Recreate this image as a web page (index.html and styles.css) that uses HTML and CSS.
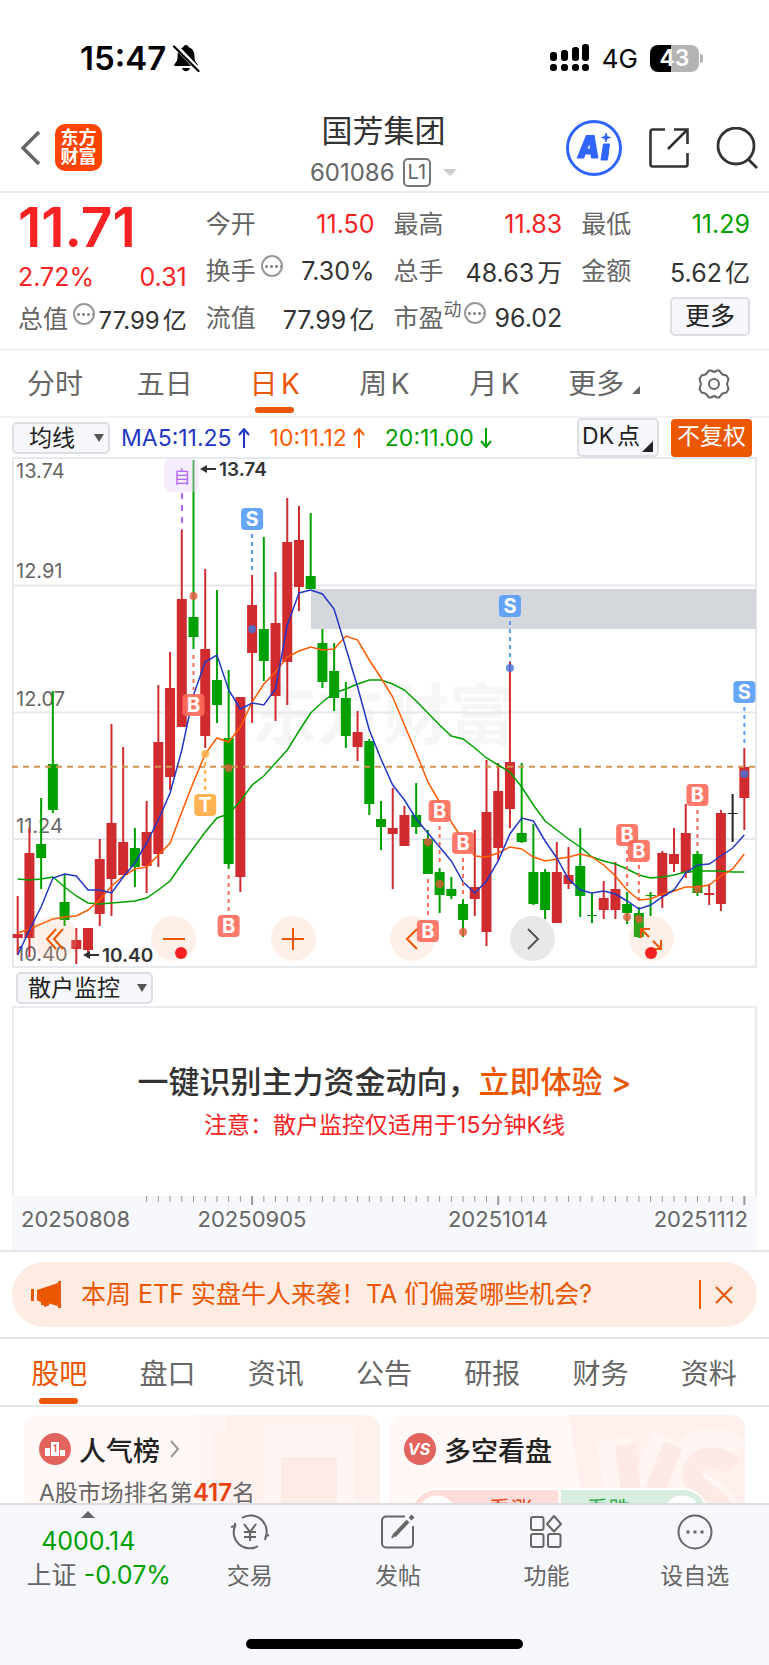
FILE: index.html
```html
<!DOCTYPE html>
<html lang="zh-CN">
<head>
    <meta charset="UTF-8">
    <meta name="viewport" content="width=device-width, initial-scale=1.0">
    <title>国芳集团 601086</title>
    <link rel="stylesheet" href="styles.css">
</head>
<body>

    <!-- Status bar -->
    <div class="status">
        <div class="status-left">
            <span class="clock">15:47</span>
            <svg width="28" height="28" viewBox="0 0 28 28" aria-hidden="true">
                <path d="M14 1c1.600 0 2.600 1 2.800 2.300 3.700 1.100 5.600 4.200 5.600 8.200 0 5 1.300 6.500 3 8.500.9 1.100.5 2-.8 2H3.400c-1.300 0-1.700-.9-.8-2 1.700-2 3-3.500 3-8.500 0-4 1.900-7.100 5.600-8.200C11.400 2 12.400 1 14 1z"/>
                <path d="M10 24h8c-.5 2-2 3.200-4 3.200S10.500 26 10 24z"/>
                <path d="M3 1.500l24 25" stroke="#fff" stroke-width="5"/>
                <path d="M2 2.500l24.500 24.500" stroke="#000" stroke-width="2.200" stroke-linecap="round"/>
            </svg>
        </div>
        <div class="status-right">
            <svg width="40" height="28" viewBox="0 0 40 28" aria-hidden="true">
                <rect x="0" y="8" width="7" height="9" rx="3"/><rect x="11" y="6" width="7" height="11" rx="3"/>
                <rect x="22" y="3" width="7" height="14" rx="3"/><rect x="32" y="0" width="7" height="17" rx="3"/>
                <rect x="0" y="20" width="7" height="7" rx="3"/><rect x="11" y="20" width="7" height="7" rx="3"/>
                <rect x="22" y="20" width="7" height="7" rx="3"/><rect x="32" y="20" width="7" height="7" rx="3"/>
            </svg>
            <span class="net">4G</span>
            <span class="battery">43</span>
        </div>
    </div>

    <!-- Header -->
    <header>
        <div class="head-left">
            <button class="icon-btn" aria-label="返回">
                <svg width="22" height="36" viewBox="0 0 22 36" fill="none" stroke="#666" stroke-width="3.500"><path d="M20 2L4 18l16 16"/></svg>
            </button>
            <a class="logo" href="#">东方<br>财富</a>
        </div>
        <div class="head-title">
            <h1>国芳集团</h1>
            <div class="code">601086 <span class="level">L1</span><span class="caret"></span></div>
        </div>
        <div class="head-right">
            <button class="icon-btn" aria-label="AI">
                <svg width="56" height="56" viewBox="0 0 56 56" fill="none">
                    <circle cx="28" cy="28" r="26.500" stroke="#3064ff" stroke-width="3"/>
                    <path d="M20 15h8.500l4 23.500h-7.500l-.5-4h-5l-1.500 4h-7.500zM21.500 28.500h2.500l-.5-4z" fill="#3064ff" fill-rule="evenodd"/>
                    <path d="M37.500 24h6l-2 16h-6.500z" fill="#3064ff" stroke="#3064ff" stroke-linejoin="round"/>
                    <path d="M40 13c.5 3 1.500 4 4.500 4.500-3 .5-4 1.500-4.500 4.500-.5-3-1.500-4-4.500-4.500 3-.5 4-1.500 4.500-4.500z" fill="#3064ff" stroke="#3064ff"/>
                </svg>
            </button>
            <button class="icon-btn" aria-label="分享">
                <svg width="42" height="42" viewBox="0 0 42 42" fill="none" stroke="#333" stroke-width="2.600">
                    <path d="M17 2.500H4.500a2 2 0 0 0-2 2v33a2 2 0 0 0 2 2h33a2 2 0 0 0 2-2V26"/><path d="M26 2.500h13.500V17M39 3L20 22"/>
                </svg>
            </button>
            <button class="icon-btn" aria-label="搜索">
                <svg width="42" height="42" viewBox="0 0 42 42" fill="none" stroke="#333" stroke-width="2.800">
                    <circle cx="20" cy="19" r="18"/><path d="M32 32l9 9"/>
                </svg>
            </button>
        </div>
    </header>

    <main>
        <!-- Quote -->
        <section class="quote">
            <div class="col first">
                <div class="price">11.71</div>
                <div class="row red"><span>2.72%</span><span>0.31</span></div>
                <div class="row"><span class="label">总值<i class="info"></i></span><span>77.99亿</span></div>
            </div>
            <div class="col">
                <div class="row"><span class="label">今开</span><span class="red">11.50</span></div>
                <div class="row"><span class="label">换手<i class="info"></i></span><span>7.30%</span></div>
                <div class="row"><span class="label">流值</span><span>77.99亿</span></div>
            </div>
            <div class="col">
                <div class="row"><span class="label">最高</span><span class="red">11.83</span></div>
                <div class="row"><span class="label">总手</span><span>48.63万</span></div>
                <div class="row"><span class="label">市盈<small>动</small><i class="info tight"></i></span><span>96.02</span></div>
            </div>
            <div class="col">
                <div class="row"><span class="label">最低</span><span class="green">11.29</span></div>
                <div class="row"><span class="label">金额</span><span>5.62亿</span></div>
                <div class="row end"><button class="more">更多</button></div>
            </div>
        </section>

        <!-- K line periods -->
        <nav class="periods">
            <a href="#">分时</a>
            <a href="#">五日</a>
            <a href="#" class="on">日K</a>
            <a href="#">周K</a>
            <a href="#">月K</a>
            <a href="#" class="sub">更多</a>
            <button class="icon-btn" aria-label="设置">
                <svg width="32" height="32" viewBox="0 0 32 32" fill="none" stroke="#666" stroke-width="2">
                    <path d="M11 2.500h2l3 1.500 3-1.500h2l3.500 4 4 1 2 3.500-1.500 5 1.500 5-2 3.500-4 1-3.500 4h-2l-3-1.500-3 1.500h-2l-3.500-4-4-1-2-3.500 1.500-5-1.500-5 2-3.500 4-1z" stroke-linejoin="round"/>
                    <circle cx="16" cy="16" r="5"/>
                </svg>
            </button>
        </nav>

        <!-- Indicators -->
        <div class="indicators">
            <div class="pick pick-ma">
                <select aria-label="主图指标"><option>均线</option><option>BOLL</option></select>
            </div>
            <span class="ma ma5">MA5:11.25<svg width="12" height="20" viewBox="0 0 12 20"><path d="M6 20V1M1 7l5-6 5 6"/></svg></span>
            <span class="ma ma10">10:11.12<svg width="12" height="20" viewBox="0 0 12 20"><path d="M6 20V1M1 7l5-6 5 6"/></svg></span>
            <span class="ma ma20">20:11.00<svg width="12" height="20" viewBox="0 0 12 20"><path d="M6 0v19M1 13l5 6 5-6"/></svg></span>
            <button class="dk">DK点</button>
            <button class="adjust">不复权</button>
        </div>

        <!-- Chart -->
        <div class="chart">
            <svg id="candles" viewBox="12 457 745 511"></svg>
            <div class="tools">
                <button aria-label="最早"><svg width="20" height="24" viewBox="0 0 20 24"><path d="M11 2L2 12l9 10M18 2L9 12l9 10"/></svg></button>
                <button aria-label="缩小" class="dot"><svg width="24" height="24" viewBox="0 0 24 24"><path d="M1 12h22"/></svg></button>
                <button aria-label="放大"><svg width="24" height="24" viewBox="0 0 24 24"><path d="M1 12h22M12 1v22"/></svg></button>
                <button aria-label="向左"><svg width="24" height="24" viewBox="0 0 24 24"><path d="M16 2L6 12l10 10"/></svg></button>
                <button aria-label="向右" class="gray"><svg width="24" height="24" viewBox="0 0 24 24"><path d="M8 2l10 10L8 22"/></svg></button>
                <button aria-label="全屏" class="dot mid"><svg width="24" height="24" viewBox="0 0 24 24"><path d="M2 11V2h9M2 2l8 8M22 13v9h-9M22 22l-8-8"/></svg></button>
            </div>
            <svg id="marks" viewBox="12 457 745 511"></svg>
        </div>

        <div class="sub-pick">
            <div class="pick">
                <select aria-label="副图指标"><option>散户监控</option><option>MACD</option></select>
            </div>
        </div>
        <section class="promo">
            <p class="promo-main">一键识别主力资金动向，<a href="#">立即体验 &gt;</a></p>
            <p class="promo-note">注意：散户监控仅适用于15分钟K线</p>
        </section>
        <div class="axis"><svg id="dates" viewBox="12 1196 745 54"></svg></div>

        <!-- Notice -->
        <div class="notice">
            <svg width="31" height="28" viewBox="0 0 31 28" fill="#eb5600" aria-hidden="true">
                <path d="M0 8h3v12H0zM6 9l21-7V0h3v27h-3v-2l-9-2.500v2L13 26v-2h-3v-3l-4-1.500z"/>
            </svg>
            <a href="#">本周 ETF 实盘牛人来袭！TA 们偏爱哪些机会?</a>
            <button class="close" aria-label="关闭">
                <svg width="18" height="18" viewBox="0 0 18 18" fill="none" stroke="#eb5600" stroke-width="2"><path d="M1 1l16 16M17 1L1 17"/></svg>
            </button>
        </div>

        <nav class="tabs">
            <a href="#" class="on">股吧</a>
            <a href="#">盘口</a>
            <a href="#">资讯</a>
            <a href="#">公告</a>
            <a href="#">研报</a>
            <a href="#">财务</a>
            <a href="#">资料</a>
        </nav>

        <div class="cards">
            <section class="card">
                <svg class="deco" width="186" height="130" viewBox="0 0 186 130" aria-hidden="true">
                    <path fill="#fff1ee" d="M0 0h186v130H0z"/>
                    <path fill="#fff6f4" d="M0 0h32v18H18v112H0zM70 10h90v110h20v10H70z"/>
                    <path fill="#fdebe8" d="M87 42h56v88H87zM22 96h40v34H22z"/>
                    <path fill="#fff4f2" d="M103 98l18-10v42h-8V100l-10 4z"/>
                </svg>
                <h2>
                    <svg width="32" height="32" viewBox="0 0 32 32" aria-hidden="true">
                        <circle cx="16" cy="16" r="16" fill="#e3635f"/>
                        <path fill="#fff" d="M6 15h5v8H6zM12 9h8v14h-8zM21 17h5v6h-5z"/>
                        <path d="M14.500 13l2-1v7" stroke="#e3635f" stroke-width="1.500" fill="none"/>
                    </svg>
                    人气榜
                    <svg width="12" height="18" viewBox="0 0 12 18" fill="none" stroke="#999" stroke-width="2"><path d="M3 1l7 8-7 8"/></svg>
                </h2>
                <p>A股市场排名第<b>417</b>名</p>
            </section>
            <section class="card">
                <svg class="deco" width="180" height="130" viewBox="0 0 180 130" aria-hidden="true">
                    <path fill="#fff0ed" d="M4 0h176v130H24z"/>
                    <g fill="none" stroke-linejoin="round">
                        <path stroke="#fff5f3" stroke-width="34" d="M48 24l14 90 42-90M170 40c-24-20-54-4-50 18 6 22 40 20 36 44"/>
                        <path stroke="#fdeae7" stroke-width="20" d="M60 30l12 90 36-90M168 52c-20-20-46-6-40 12 6 16 34 16 30 40"/>
                    </g>
                </svg>
                <h2>
                    <svg width="32" height="32" viewBox="0 0 32 32" aria-hidden="true">
                        <circle cx="16" cy="16" r="16" fill="#e3635f"/>
                        <text class="vs" x="15" y="22" text-anchor="middle">VS</text>
                    </svg>
                    多空看盘
                </h2>
                <div class="vote"><button class="up">看涨</button><button class="down">看跌</button></div>
            </section>
        </div>
    </main>

    <!-- Bottom bar -->
    <footer>
        <div class="bar">
            <a href="#" class="index">
                <span class="tri"></span>
                <span class="green">4000.14</span>
                <span>上证 <span class="green">-0.07%</span></span>
            </a>
            <a href="#">
                <svg width="40" height="36" viewBox="0 0 40 36">
                    <path d="M12 4a16 16 0 0 1 24 18l3-1M28 32A16 16 0 0 1 5 12l-4 1"/><path d="M36 22l-1 4M5 12l0-3M14 10l6 8 6-8M20 18v9M14 18h12M14 23h12"/>
                </svg>
                交易
            </a>
            <a href="#">
                <svg width="36" height="36" viewBox="0 0 36 36">
                    <path d="M25 2.500H6a4 4 0 0 0-4 4v23a4 4 0 0 0 4 4h23a4 4 0 0 0 4-4V12"/><path d="M14 22l14-15" stroke-width="4"/><path d="M30 5l3-3" stroke-width="4"/><path d="M12 24l3-5"/>
                </svg>
                发帖
            </a>
            <a href="#">
                <svg width="36" height="36" viewBox="0 0 36 36">
                    <rect x="3" y="3" width="12.500" height="13" rx="2"/><rect x="3" y="20" width="12.500" height="13" rx="2"/><rect x="20" y="20" width="12.500" height="13" rx="2"/><path d="M26 2l7 8-7 7.500-7-7.500z" stroke-linejoin="round"/>
                </svg>
                功能
            </a>
            <a href="#">
                <svg width="36" height="36" viewBox="0 0 36 36">
                    <circle cx="18" cy="18" r="16.500"/><path d="M9.500 18h3M16.500 18h3M23.500 18h3" stroke-width="3"/>
                </svg>
                设自选
            </a>
        </div>
        <div class="home"></div>
    </footer>

    <script src="chart.js"></script>
</body>
</html>
```
FILE: styles.css
```css
* {
    box-sizing: border-box;
}

body {
    font-family: Inter, "Noto Sans CJK SC", sans-serif;
    margin: 0;
    height: 100vh;
    display: flex;
    flex-direction: column;
    background: #fff;
    color: #333;
    overflow: hidden;
    text-autospace: normal;
}

a {
    color: inherit;
    text-decoration: none;
}

button, select {
    font: inherit;
    color: inherit;
    margin: 0;
    padding: 0;
    border: 0;
    background: none;
    text-autospace: inherit;
}

svg {
    display: block;
    flex-shrink: 0;
}

h1, h2, p {
    margin: 0;
    font-weight: 400;
}

.red { color: #f92223; }
.green { color: #00a000; }

.icon-btn {
    display: flex;
    align-items: center;
    justify-content: center;
}

/* Status bar */
.status {
    flex-shrink: 0;
    display: flex;
    justify-content: space-between;
    align-items: center;
    padding: 40px 66px 0 80px;
    color: #000;
}

.status-left, .status-right {
    display: flex;
    align-items: center;
    height: 36px;
}

.status-left { gap: 6px; }
.status-right { gap: 12px; }

.clock {
    font-size: 33px;
    font-weight: 600;
}

.net {
    font-size: 26px;
}

.battery {
    position: relative;
    width: 49px;
    height: 27px;
    margin-right: 4px;
    border-radius: 8px;
    background: linear-gradient(90deg, #000 43%, #b3b3b3 43%);
    color: #fff;
    font-size: 23px;
    font-weight: 600;
    line-height: 27px;
    text-align: center;
}

.battery::after {
    content: "";
    position: absolute;
    right: -4px;
    top: 9px;
    width: 3px;
    height: 9px;
    border-radius: 0 3px 3px 0;
    background: #b3b3b3;
}

/* Header */
header {
    flex-shrink: 0;
    display: grid;
    grid-template-columns: 1fr auto 1fr;
    align-items: center;
    padding: 28px 11px 0 19px;
    border-bottom: 2px solid #ececec;
}

.head-left {
    display: flex;
    align-items: center;
    gap: 14px;
}

.logo {
    width: 47px;
    height: 47px;
    padding-top: 4px;
    border-radius: 10px;
    background: #ff4400;
    color: #fff;
    font-size: 18px;
    font-weight: 700;
    line-height: 19px;
    text-align: center;
}

.head-title {
    padding: 8px 10px 0 0;
    text-align: center;
}

h1 {
    font-size: 31px;
    line-height: 38px;
}

.code {
    display: flex;
    align-items: center;
    justify-content: center;
    height: 41px;
    padding-top: 3px;
    gap: 8px;
    font-size: 24px;
    color: #666;
}

.level {
    padding: 0 3px;
    border: 2px solid #777;
    border-radius: 5px;
    font-size: 20px;
    line-height: 25px;
}

.caret {
    margin-left: 4px;
    border: 7px solid transparent;
    border-top-color: #ccc;
    border-bottom: 0;
}

.head-right {
    display: flex;
    align-items: center;
    justify-content: flex-end;
    gap: 26px;
}

main {
    flex: 1;
    min-height: 0;
    overflow: hidden;
}

/* Quote */
.quote {
    display: grid;
    grid-template-columns: repeat(4, 1fr);
    column-gap: 19px;
    padding: 7px 19px 8px 18px;
    border-bottom: 1px solid #ececec;
    font-size: 25px;
}

.row {
    display: flex;
    justify-content: space-between;
    align-items: center;
    height: 47px;
    white-space: nowrap;
}

.first .row {
    height: 46px;
}

.first .row:last-child {
    height: 36px;
    font-size: 24px;
}

.row.end {
    justify-content: flex-end;
}

.label {
    display: flex;
    padding-bottom: 3px;
    color: #666;
    font-size: 25px;
}

.label small {
    font-size: 18px;
    line-height: 24px;
}

/* small round hint with three dots */
.info {
    width: 22px;
    height: 22px;
    margin: 4px 0 0 5px;
    border: 2px solid #999;
    border-radius: 50%;
    background: radial-gradient(circle, #888 1px, transparent 2px) 1px 7px / 5px 5px repeat-x;
}

.info.tight {
    margin-left: 2px;
}

.price {
    color: #f92223;
    font-size: 55px;
    font-weight: 600;
    line-height: 54px;
}

.more {
    width: 80px;
    height: 39px;
    margin-bottom: 3px;
    border: 2px solid #dddee4;
    border-radius: 5px;
    background: #f6f7fa;
    color: #222;
    font-size: 25px;
    line-height: 34px;
}

/* Tabs */
.periods, .tabs {
    display: grid;
    grid-template-columns: repeat(7, 1fr);
    font-size: 28px;
    color: #666;
    text-align: center;
}

.periods {
    height: 68px;
    line-height: 68px;
    border-bottom: 2px solid #f2f2f4;
}

.periods a, .tabs a {
    position: relative;
}

.on {
    color: #eb5600;
}

.on::after {
    content: "";
    position: absolute;
    left: 50%;
    bottom: 5px;
    width: 39px;
    height: 6px;
    margin-left: -20px;
    border-radius: 3px;
    background: #eb5600;
}

.sub::after {
    content: "";
    display: inline-block;
    margin-left: 8px;
    border-left: 8px solid transparent;
    border-bottom: 8px solid #666;
}

/* Indicators */
.indicators {
    display: flex;
    align-items: center;
    height: 39px;
    margin: 0 17px 0 12px;
    font-size: 23px;
    white-space: nowrap;
}

.pick {
    position: relative;
    width: 137px;
    height: 32px;
}

.pick select {
    appearance: none;
    width: 100%;
    height: 100%;
    padding-left: 10px;
    border: 2px solid #dddee4;
    border-radius: 5px;
    background: #f6f7fa;
    color: #222;
    font-size: 23px;
    line-height: 28px;
}

.pick::after {
    content: "";
    position: absolute;
    right: 6px;
    top: 12px;
    border: 5px solid transparent;
    border-top: 8px solid #555;
    border-bottom: 0;
}

.pick-ma {
    width: 98px;
    margin-right: 11px;
}

.pick-ma select {
    padding-left: 15px;
}

.ma {
    display: flex;
    align-items: center;
    gap: 6px;
    margin-right: 20px;
}

.ma svg {
    fill: none;
    stroke: currentColor;
    stroke-width: 2;
}

.ma5 { color: #2238c4; }
.ma10 { color: #ff5a00; }
.ma20 { color: #00a000; }

.dk {
    position: relative;
    width: 82px;
    height: 39px;
    margin-left: auto;
    padding: 0 14px 3px 0;
    border: 2px solid #dddee4;
    border-radius: 5px;
    background: #f6f7fa;
    color: #222;
    font-size: 23px;
    line-height: 30px;
}

.dk::after {
    content: "";
    position: absolute;
    right: 4px;
    bottom: 3px;
    border-left: 11px solid transparent;
    border-bottom: 11px solid #222;
}

.adjust {
    width: 81px;
    height: 38px;
    margin-left: 12px;
    padding-bottom: 3px;
    border-radius: 4px;
    background: #eb5600;
    color: #fff;
    font-size: 23px;
    line-height: 30px;
}

/* Chart */
.chart {
    position: relative;
    margin: 0 12px;
}

.chart svg text, .axis text {
    font-family: Inter, "Noto Sans CJK SC", sans-serif;
}

#marks {
    position: absolute;
    left: 0;
    top: 0;
    width: 100%;
    pointer-events: none;
}

.grid { stroke: #e6e8ed; stroke-width: 2; fill: none; }
.scale { font-size: 20px; fill: #666; }
.extreme { font-size: 19px; font-weight: 600; fill: #333; }
.watermark { font-size: 66px; font-weight: 700; fill: #f6f6f7; }
.mark { font-size: 20px; font-weight: 700; fill: #fff; }
.mark-zi { font-size: 17px; fill: #b066ff; }

.tools {
    position: absolute;
    left: 20px;
    right: 83px;
    bottom: 7px;
    display: flex;
    justify-content: space-between;
}

.tools button {
    position: relative;
    display: flex;
    align-items: center;
    justify-content: center;
    width: 45px;
    height: 45px;
    border-radius: 50%;
    background: rgba(250, 180, 140, .2);
}

.tools svg {
    fill: none;
    stroke: #eb5600;
    stroke-width: 2;
}

.tools .gray {
    background: rgba(210, 210, 210, .5);
}

.tools .gray svg {
    stroke: #555;
}

.dot::after {
    content: "";
    position: absolute;
    left: 24px;
    bottom: 2px;
    width: 12px;
    height: 12px;
    border-radius: 50%;
    background: #f92223;
}

.dot.mid::after {
    left: 16px;
}

/* Sub chart */
.sub-pick {
    padding: 4px 16px 2px;
}

.promo {
    height: 190px;
    margin: 0 12px;
    padding-top: 52px;
    border: 2px solid #eaebef;
    border-bottom: 0;
    text-align: center;
    white-space: nowrap;
    text-autospace: no-autospace;
}

.promo-main {
    font-size: 31px;
    font-weight: 500;
    line-height: 44px;
}

.promo-main a {
    color: #eb5600;
}

.promo-note {
    font-size: 23px;
    line-height: 42px;
    color: #f92223;
}

.axis {
    padding: 0 12px;
    border-bottom: 2px solid #e3e4ea;
}

.axis svg {
    background: #f7f8fb;
}

.axis text {
    font-size: 22px;
    fill: #666;
}

/* Notice */
.notice {
    display: flex;
    align-items: center;
    height: 65px;
    margin: 10px 12px;
    padding: 0 24px 0 19px;
    border-radius: 33px;
    background: #feece3;
    color: #eb5600;
    font-size: 25px;
    line-height: 34px;
    white-space: nowrap;
    text-autospace: no-autospace;
}

.notice a {
    flex: 1;
    margin-left: 19px;
    padding-bottom: 2px;
}

.close {
    height: 29px;
    padding-left: 14px;
    border-left: 2px solid #eb5600;
}

.tabs {
    height: 70px;
    padding: 0 6px 0 5px;
    border-top: 2px solid #e6e6ea;
    border-bottom: 2px solid #e6e6ea;
    line-height: 70px;
}

/* Cards */
.cards {
    display: grid;
    grid-template-columns: 1fr 1fr;
    gap: 9px;
    padding: 8px 24px;
}

.card {
    position: relative;
    height: 130px;
    padding: 13px 15px;
    border-radius: 14px;
    background: #fff8f6;
    overflow: hidden;
}

.deco {
    position: absolute;
    right: 0;
    top: 0;
}

h2 {
    position: relative;
    display: flex;
    align-items: center;
    gap: 8px;
    height: 42px;
    font-size: 27px;
    font-weight: 500;
    color: #222;
}

.vs {
    font-size: 16px;
    font-weight: 700;
    font-style: italic;
    fill: #fff;
}

.card p {
    position: relative;
    margin-top: 2px;
    font-size: 23px;
    line-height: 42px;
    color: #666;
    text-autospace: no-autospace;
}

.card b {
    font-size: 24px;
    font-weight: 600;
    color: #e8430f;
}

.vote {
    position: relative;
    display: flex;
    gap: 3px;
    height: 50px;
    margin: 18px 22px 0 7px;
    border: 2px solid #fff;
    border-radius: 25px;
    overflow: hidden;
    font-size: 22px;
}

.vote button {
    flex: 1;
    padding-bottom: 12px;
}

.up {
    padding-left: 50px;
    background: radial-gradient(circle at 24px 24px, #fff 18px, transparent 19px), #fddcd9;
    color: #e8430f;
}

.down {
    padding-right: 50px;
    background: radial-gradient(circle at calc(100% - 24px) 24px, #fff 18px, transparent 19px), #d5eedd;
    color: #2fa84f;
}

/* Bottom bar */
footer {
    flex-shrink: 0;
    border-top: 2px solid #dcdde2;
    background: #f6f7fa;
}

.bar {
    display: grid;
    grid-template-columns: 175fr 148fr 148fr 148fr 148fr;
    height: 134px;
    font-size: 23px;
    color: #666;
}

.bar a {
    display: flex;
    flex-direction: column;
    align-items: center;
    padding-top: 9px;
    gap: 9px;
    line-height: 34px;
}

.bar svg {
    fill: none;
    stroke: #666;
    stroke-width: 2;
}

.bar .index {
    gap: 0;
    padding: 6px 0 0 22px;
    font-size: 25px;
    line-height: 34px;
    white-space: nowrap;
}

.index > span:nth-child(2) {
    margin-right: 21px;
    padding-top: 6px;
}

.bar .tri {
    margin-right: 21px;
    border: 7px solid transparent;
    border-top: 0;
    border-bottom-color: #666;
}

.home {
    width: 36%;
    height: 10px;
    margin: 0 auto 16px;
    border-radius: 5px;
    background: #000;
}
```
FILE: chart.js
```js
const RED = '#d02c2f';
const GREEN = '#00a000';
const BLACK = '#222';
const STEP = 11.72;
const START = 17.7;

// color, high, body top, body bottom, low
const candles = [
    'r 896 934 938 955', 'r 828 853 938 957', 'g 798 844 858 889', 'g 691 764 810 813', 'g 875 902 920 926',
    'r 928 940 949 964', 'r 928 928 950 955', 'r 839 859 914 926', 'r 724 823 879 916', 'r 747 842 875 875',
    'g 828 848 867 887', 'r 801 832 866 893', 'r 685 742 854 867', 'r 652 688 777 790', 'r 530 599 727 727',
    'g 460 617 637 649', 'r 569 649 736 748', 'g 590 680 705 723', 'g 670 738 864 869', 'r 697 697 877 892',
    'r 575 605 653 723', 'g 537 629 661 681', 'r 572 623 696 721', 'r 498 542 662 705', 'r 506 540 587 611',
    'g 513 576 589 589', 'g 629 643 682 688', 'g 643 671 698 711', 'g 682 698 736 748', 'r 711 732 747 761',
    'g 739 741 804 815', 'g 801 819 827 850', 'r 788 828 834 889', 'r 806 815 846 846', 'g 783 815 827 834',
    'g 830 839 874 874', 'g 868 872 895 913', 'g 877 889 896 899', 'g 899 904 920 937', 'r 830 887 899 916',
    'r 760 812 932 946', 'r 763 791 848 860', 'r 662 762 809 828', 'g 763 833 842 843', 'g 824 872 904 905',
    'g 869 872 910 919', 'r 842 872 923 923', 'r 847 875 884 889', 'g 828 866 896 917', 'g 893 915 916 923',
    'r 881 898 910 919', 'r 862 889 910 919', 'g 892 904 913 924', 'g 907 913 937 938', 'g 892 895 896 916',
    'r 851 853 896 908', 'r 828 854 864 872', 'r 804 833 873 878', 'g 851 854 893 896', 'r 884 893 895 905',
    'r 810 813 904 911', 'k 794 813 814 842', 'r 748 767 798 830'
];

const ma5 = [955, 930, 907, 878, 874, 876, 890, 890, 893, 877, 863, 843, 820, 793, 750, 695, 662, 655, 690, 709, 703,
    705, 689, 625, 593, 590, 594, 609, 648, 687, 730, 759, 785, 800, 819, 833, 847, 861, 882, 893, 881, 861,
    834, 818, 821, 841, 858, 879, 890, 893, 891, 894, 901, 909, 905, 897, 890, 873, 865, 864, 856, 848, 835];
const ma10 = [933, 929, 924, 919, 917, 916, 910, 900, 886, 876, 869, 867, 855, 843, 812, 782, 754, 738, 742, 727, 702,
    684, 672, 657, 651, 647, 650, 649, 636, 640, 660, 678, 697, 725, 753, 782, 802, 822, 840, 856, 857, 853,
    847, 849, 857, 861, 859, 857, 854, 857, 865, 876, 890, 900, 899, 894, 891, 887, 887, 885, 876, 869, 854];
const ma20 = [879, 880, 879, 877, 887, 896, 903, 904, 903, 902, 901, 898, 890, 881, 864, 848, 832, 818, 814, 801, 785,
    776, 763, 750, 731, 713, 702, 693, 689, 684, 680, 680, 684, 690, 701, 713, 725, 736, 739, 748, 758, 765,
    772, 787, 805, 821, 830, 839, 847, 857, 861, 864, 869, 875, 878, 877, 875, 872, 871, 871, 871, 872, 872];

// candle index, letter, box top, dash from, dash to, dot
const marks = [
    [20, 'S', 508, 534, 570, 629], [42, 'S', 595, 621, 662, 668], [62, 'S', 681, 707, 745, 774],
    [15, 'B', 694, 655, 690, 596], [16, 'T', 794, 762, 790, 754], [18, 'B', 915, 875, 911, 768],
    [35, 'B', 920, 879, 916, 842], [36, 'B', 800, 826, 865, 884], [38, 'B', 832, 858, 895, 932],
    [52, 'B', 824, 850, 890, 917], [53, 'B', 840, 865, 903, 919], [58, 'B', 784, 810, 848, 889]
];

const xAt = i => START + STEP * i;

function drawLine(values, color) {
    const points = values.map((y, i) => xAt(i).toFixed(1) + ',' + y).join(' ');
    return `<polyline points="${points}" fill="none" stroke="${color}" stroke-width="1.5"/>`;
}

function drawArrow(x, y) {
    return `<path d="M${x + 16} ${y}H${x + 4}" stroke="#333" stroke-width="2"/><path d="M${x} ${y}l7-4v8z" fill="#333"/>`;
}

function drawCandles() {
    let out = '<text class="watermark" x="251" y="739">东方财富</text>';
    out += '<path class="grid" d="M12 585.500H757M12 712.500H757M12 839H757"/>';
    out += '<rect class="grid" x="13" y="458" width="743" height="509"/>';
    out += '<rect x="311" y="589" width="445" height="40" fill="#d4d7dc"/>';
    [['13.74', 478], ['12.91', 578], ['12.07', 706], ['11.24', 833], ['10.40', 961]].forEach(([t, y]) => {
        out += `<text class="scale" x="16" y="${y}">${t}</text>`;
    });
    candles.forEach((row, i) => {
        const [c, high, top, bottom, low] = row.split(' ');
        const color = c === 'r' ? RED : c === 'g' ? GREEN : BLACK;
        const x = xAt(i);
        out += `<rect x="${x - 1}" y="${high}" width="2" height="${low - high}" fill="${color}"/>`;
        out += `<rect x="${x - 5}" y="${top}" width="10" height="${bottom - top}" fill="${color}"/>`;
    });
    out += '<path d="M12 766.700H757" stroke="#cf9350" stroke-width="2" stroke-dasharray="6 5"/>';
    out += drawLine(ma20, GREEN) + drawLine(ma10, '#ff5a00') + drawLine(ma5, '#2238c4');
    out += drawArrow(200, 469) + '<text class="extreme" x="219" y="476">13.74</text>';
    out += drawArrow(83, 955) + '<text class="extreme" x="102" y="962">10.40</text>';
    document.getElementById('candles').innerHTML = out;
}

function drawMarks() {
    const colors = { S: '#559cf9', B: '#ff6b5b', T: '#ffab40' };
    let out = '<rect x="164" y="459" width="35" height="33" rx="6" fill="#e6d0fb" opacity=".4"/>';
    out += '<text class="mark-zi" x="182" y="483" text-anchor="middle">自</text>';
    out += '<path d="M182 493V530" stroke="#b066ff" stroke-width="2" stroke-dasharray="6 6"/>';
    marks.forEach(([i, letter, top, from, to, dot]) => {
        const x = xAt(i);
        const color = colors[letter];
        const dotColor = letter === 'S' ? '#3f76e0' : letter === 'T' ? '#ffab40' : '#e55a3c';
        out += `<path d="M${x} ${from}V${to}" stroke="${color}" stroke-width="2" stroke-dasharray="4 4"/>`;
        out += `<circle cx="${x}" cy="${dot}" r="4" fill="${dotColor}" opacity=".8"/>`;
        out += `<rect x="${x - 11}" y="${top}" width="22" height="22" rx="4" fill="${color}" opacity=".9"/>`;
        out += `<text class="mark" x="${x}" y="${top + 18}" text-anchor="middle">${letter}</text>`;
    });
    document.getElementById('marks').innerHTML = out;
}

function drawDates() {
    let out = '';
    for (let i = 11; i <= 62; i++) {
        const major = (i + 1) % 21 === 0;
        out += `<path d="M${xAt(i)} 1196v${major ? 9 : 6}" stroke="#999" stroke-width="${major ? 2 : 1}"/>`;
    }
    out += '<text x="21" y="1227">20250808</text>';
    out += '<text x="252" y="1227" text-anchor="middle">20250905</text>';
    out += '<text x="498" y="1227" text-anchor="middle">20251014</text>';
    out += '<text x="748" y="1227" text-anchor="end">20251112</text>';
    document.getElementById('dates').innerHTML = out;
}

drawCandles();
drawMarks();
drawDates();
```
